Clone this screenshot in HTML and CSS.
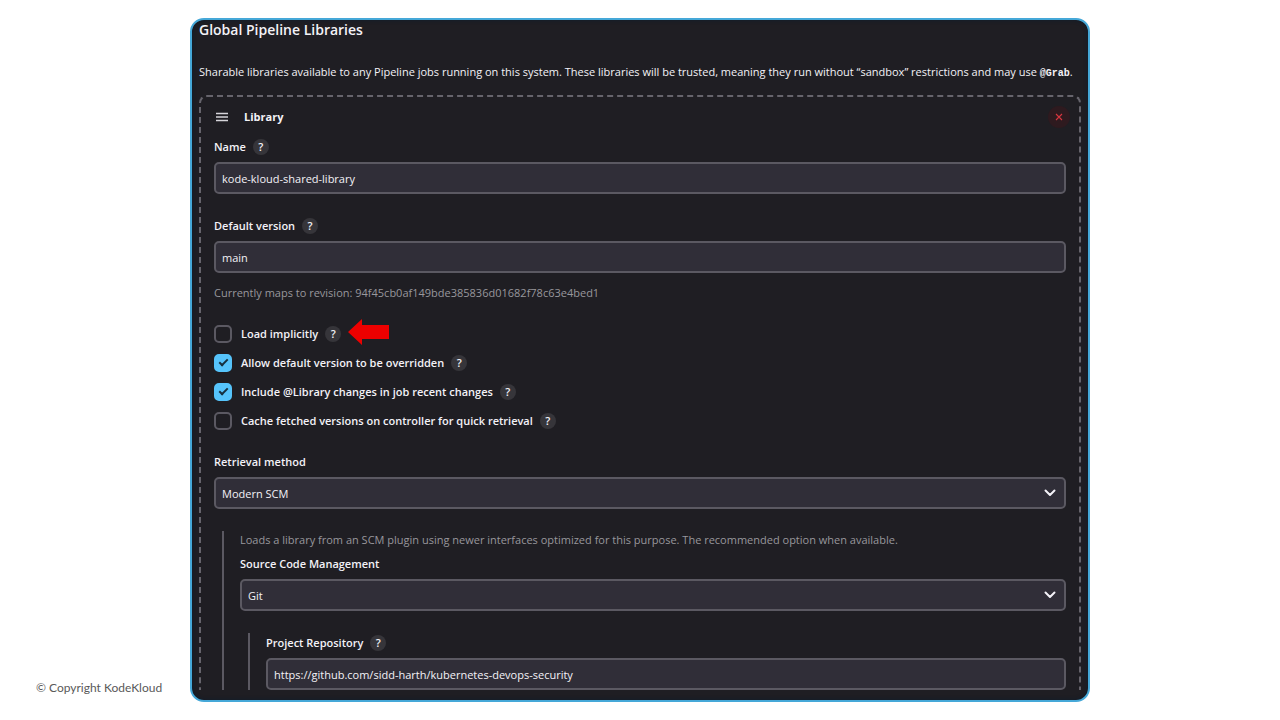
FILE: index.html
```html
<!DOCTYPE html>
<html lang="en">
<head>
    <meta charset="UTF-8">
    <meta name="viewport" content="width=device-width, initial-scale=1.0">
    <title>Global Pipeline Libraries</title>
    <link rel="stylesheet" href="styles.css">
</head>
<body>
    <footer>&copy; Copyright KodeKloud</footer>
    <main class="panel">
        <h1>Global Pipeline Libraries</h1>
        <p class="intro">Sharable libraries available to any Pipeline jobs running on this system. These libraries will be trusted, meaning they run without “sandbox” restrictions and may use <code>@Grab</code>.</p>

        <form class="library">
            <div class="library-header">
                <svg class="handle" viewBox="0 0 14 10" aria-hidden="true">
                    <path d="M1 1.5h12M1 5h12M1 8.5h12"/>
                </svg>
                <h2>Library</h2>
                <button type="button" class="remove" aria-label="Remove">
                    <svg viewBox="0 0 8 8"><path d="M1 1l6 6M7 1l-6 6"/></svg>
                </button>
            </div>

            <div class="field">
                <div class="label-row">
                    <label for="name">Name</label>
                    <button type="button" class="help">?</button>
                </div>
                <input type="text" class="control" id="name" value="kode-kloud-shared-library">
            </div>

            <div class="field">
                <div class="label-row">
                    <label for="version">Default version</label>
                    <button type="button" class="help">?</button>
                </div>
                <input type="text" class="control" id="version" value="main">
                <p class="revision">Currently maps to revision: 94f45cb0af149bde385836d01682f78c63e4bed1</p>
            </div>

            <div class="checks">
                <div class="check-row">
                    <input type="checkbox" id="implicit">
                    <label for="implicit">Load implicitly</label>
                    <button type="button" class="help">?</button>
                    <svg class="arrow" viewBox="0 0 42 26" aria-hidden="true">
                        <path d="M0 13L14 0v6h27v14H14v6z"/>
                    </svg>
                </div>
                <div class="check-row">
                    <input type="checkbox" id="override" checked>
                    <label for="override">Allow default version to be overridden</label>
                    <button type="button" class="help">?</button>
                </div>
                <div class="check-row">
                    <input type="checkbox" id="changes" checked>
                    <label for="changes">Include @Library changes in job recent changes</label>
                    <button type="button" class="help">?</button>
                </div>
                <div class="check-row">
                    <input type="checkbox" id="cache">
                    <label for="cache">Cache fetched versions on controller for quick retrieval</label>
                    <button type="button" class="help">?</button>
                </div>
            </div>

            <div class="field">
                <div class="label-row">
                    <label for="retrieval">Retrieval method</label>
                </div>
                <div class="select">
                    <select class="control" id="retrieval">
                        <option>Modern SCM</option>
                    </select>
                    <svg viewBox="0 0 12 8" aria-hidden="true"><path d="M1.5 1.5L6 6l4.5-4.5"/></svg>
                </div>
            </div>

            <div class="nested">
                <p class="description">Loads a library from an SCM plugin using newer interfaces optimized for this purpose. The recommended option when available.</p>
                <div class="field">
                    <div class="label-row">
                        <label for="scm">Source Code Management</label>
                    </div>
                    <div class="select">
                        <select class="control" id="scm">
                            <option>Git</option>
                        </select>
                        <svg viewBox="0 0 12 8" aria-hidden="true"><path d="M1.5 1.5L6 6l4.5-4.5"/></svg>
                    </div>
                </div>

                <div class="nested">
                    <div class="field">
                        <div class="label-row">
                            <label for="repo">Project Repository</label>
                            <button type="button" class="help">?</button>
                        </div>
                        <input type="text" class="control" id="repo" value="https://github.com/sidd-harth/kubernetes-devops-security">
                    </div>
                </div>
            </div>
        </form>
    </main>
</body>
</html>
```
FILE: styles.css
```css
* {
    box-sizing: border-box;
}
body {
    margin: 0;
    min-height: 100vh;
    padding: 18px 0;
    display: grid;
    grid-template-columns: 190px 1fr 190px;
    align-items: start;
    background-color: #fff;
    font-family: "Open Sans", "Noto Sans", sans-serif;
    font-size: 11px;
    line-height: 18px;
}
h1, h2, p {
    margin: 0;
}
footer {
    align-self: end;
    padding: 0 0 5px 36px;
    color: #595959;
    font-family: Lato, sans-serif;
    font-size: 12px;
}
.panel {
    padding: 0 7px 10px;
    background-color: #1f1e23;
    border: 2px solid #45a8d8;
    border-radius: 14px;
    box-shadow: inset 0 0 4px #0d1c2c;
    color: #f3f2f7;
}
h1 {
    margin-bottom: 23px;
    font-size: 14px;
    font-weight: 600;
    line-height: 20px;
}
.intro {
    margin-bottom: 14px;
}
.intro code {
    font-family: "Liberation Mono", monospace;
    font-size: 10px;
    font-weight: bold;
    line-height: 1;
}
.library {
    display: flex;
    flex-direction: column;
    gap: 22px;
    padding: 9px 13px 0;
    border: 2px dashed #66646c;
    border-bottom: none;
    border-radius: 8px 8px 0 0;
}
.library-header {
    display: flex;
    align-items: center;
    height: 22px;
    margin-bottom: -13px;
}
.handle {
    width: 14px;
    height: 10px;
    margin: 0 15px 0 1px;
    stroke: #d6d5da;
    stroke-width: 1.4;
}
h2 {
    font-size: 11px;
    font-weight: 700;
}
.remove {
    display: flex;
    align-items: center;
    justify-content: center;
    width: 22px;
    height: 22px;
    margin-left: auto;
    margin-right: -4px;
    padding: 0;
    border: none;
    border-radius: 50%;
    background-color: #2e1a1f;
}
.remove svg {
    width: 8px;
    height: 8px;
    stroke: #d8363f;
    stroke-width: 1.1;
}
.label-row {
    display: flex;
    align-items: center;
    gap: 7px;
    height: 20px;
    margin-bottom: 5px;
}
label {
    font-weight: 600;
}
.help {
    width: 16px;
    height: 16px;
    padding: 0;
    border: none;
    border-radius: 50%;
    background-color: #36353a;
    color: #f3f2f7;
    font-family: inherit;
    font-size: 11px;
    font-weight: 600;
    line-height: 16px;
}
.control {
    display: block;
    width: 100%;
    height: 32px;
    padding: 0 6px;
    appearance: none;
    border: 2px solid #5b5962;
    border-radius: 5px;
    background-color: #302e38;
    color: #f3f2f7;
    font-family: inherit;
    font-size: 11px;
}
.revision {
    margin-top: 11px;
    color: #98979c;
}
.checks {
    display: flex;
    flex-direction: column;
    gap: 10px;
}
.check-row {
    display: flex;
    align-items: center;
    gap: 7px;
    height: 19px;
}
.check-row input {
    display: flex;
    align-items: center;
    justify-content: center;
    width: 18px;
    height: 18px;
    margin: 0 2px 0 0;
    appearance: none;
    border: 2px solid #5b5962;
    border-radius: 5px;
}
.check-row input:checked {
    border-color: #56c4fb;
    background-color: #56c4fb;
}
.check-row input:checked::before {
    content: "";
    width: 7px;
    height: 3px;
    margin-bottom: 3px;
    border: solid #16303f;
    border-width: 0 0 2px 2px;
    transform: rotate(-45deg);
}
.arrow {
    width: 42px;
    height: 26px;
    margin: -6px 0 -3px;
    fill: #ed0000;
}
.select {
    position: relative;
}
.select svg {
    position: absolute;
    top: 12px;
    right: 10px;
    width: 12px;
    height: 8px;
    fill: none;
    stroke: #f3f2f7;
    stroke-width: 2;
    stroke-linecap: round;
    stroke-linejoin: round;
    pointer-events: none;
}
.nested {
    margin-left: 8px;
    padding-left: 16px;
    border-left: 2px solid #5b5962;
}
.nested .nested {
    margin-top: 22px;
}
.description {
    margin-bottom: 5px;
    color: #98979c;
}
```
